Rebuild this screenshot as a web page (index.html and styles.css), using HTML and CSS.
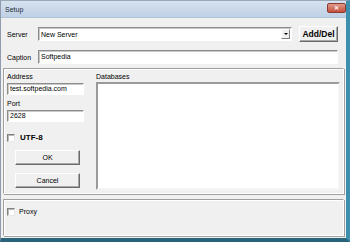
FILE: index.html
```html
<!DOCTYPE html>
<html lang="en">
<head>
	<meta charset="UTF-8">
	<title>Setup</title>
	<link rel="stylesheet" href="styles.css">
</head>
<body>
	<div class="window">
		<div class="titlebar">
			<span class="title">Setup</span>
			<span class="close">&#x2715;</span>
		</div>
		<div class="client">
			<div class="row row-server">
				<span class="lbl">Server</span>
				<div class="combo">
					<span class="combo-text">New Server</span>
					<span class="arrow"></span>
				</div>
				<div class="btn btn-add">Add/Del</div>
			</div>
			<div class="row row-caption">
				<span class="lbl">Caption</span>
				<div class="field field-wide">Softpedia</div>
			</div>
			<div class="group main">
				<div class="left">
					<div class="small-lbl">Address</div>
					<div class="field">test.softpedia.com</div>
					<div class="small-lbl port-lbl">Port</div>
					<div class="field">2628</div>
					<div class="check utf"><span class="box"></span><b>UTF-8</b></div>
					<div class="btn btn-ok">OK</div>
					<div class="btn btn-cancel">Cancel</div>
				</div>
				<div class="right">
					<div class="small-lbl">Databases</div>
					<div class="list"></div>
				</div>
			</div>
			<div class="group proxy">
				<div class="check"><span class="box"></span>Proxy</div>
			</div>
		</div>
	</div>
</body>
</html>
```

FILE: styles.css
```css
*{
	margin: 0;
	padding: 0;
	box-sizing: border-box;
}
body{
	width: 350px;
	height: 242px;
	overflow: hidden;
	font-family: "Liberation Sans", Arial, sans-serif;
	font-size: 7px;
	color: #000;
	background: #fff;
}
.window{
	width: 350px;
	height: 242px;
	border-top: 1px solid #9aa8b8;
	border-left: 1px solid #8e9cad;
	border-right: 4px solid #3d8fae;
	border-bottom: 4px solid #2a6378;
	background: #f0f0f0;
	display: flex;
	flex-direction: column;
}
.titlebar{
	height: 17px;
	background: linear-gradient(#d6e2ef, #bfd1e5);
	border-bottom: 1px solid #b4c4d6;
	display: flex;
	align-items: center;
	justify-content: space-between;
	padding: 0 0 0 4px;
}
.title{
	font-size: 7px;
	color: #1e2a38;
}
.close{
	width: 19px;
	height: 10px;
	margin-top: -2px;
	background: linear-gradient(#e09a8c, #c4503c);
	border: 1px solid #8a3a30;
	border-radius: 2px;
	color: #fff;
	font-size: 6px;
	line-height: 8px;
	text-align: center;
	font-weight: bold;
}
.client{
	flex: 1;
	display: flex;
	flex-direction: column;
	padding-top: 8px;
}
.row{
	display: flex;
	align-items: center;
	padding-left: 6px;
}
.lbl{
	width: 31px;
}
.row-server{
	height: 16px;
}
.combo{
	width: 254px;
	height: 14px;
	background: #fff;
	border: 1px solid;
	border-color: #8c8c8c #fff #fff #8c8c8c;
	box-shadow: inset 1px 1px 0 #c8c8c8;
	display: flex;
	align-items: center;
	justify-content: space-between;
	padding-left: 2px;
}
.arrow{
	width: 9px;
	height: 10px;
	margin-right: 1px;
	background: #f0f0f0;
	border: 1px solid;
	border-color: #fff #808080 #808080 #fff;
	position: relative;
}
.arrow::after{
	content: "";
	position: absolute;
	left: 2px;
	top: 3px;
	border-left: 2px solid transparent;
	border-right: 2px solid transparent;
	border-top: 2px solid #000;
}
.btn{
	background: #f0f0f0;
	border: 1px solid;
	border-color: #fff #6a6a6a #6a6a6a #fff;
	box-shadow: inset -1px -1px 0 #a8a8a8;
	display: flex;
	align-items: center;
	justify-content: center;
}
.btn-add{
	width: 39px;
	height: 16px;
	margin-left: 7px;
	font-weight: bold;
	font-size: 8.5px;
}
.row-caption{
	margin-top: 8px;
	height: 14px;
}
.field{
	height: 12px;
	background: #fff;
	border: 1px solid;
	border-color: #8c8c8c #fff #fff #8c8c8c;
	box-shadow: inset 1px 1px 0 #c8c8c8;
	padding-left: 2px;
	line-height: 10px;
	white-space: nowrap;
	overflow: hidden;
}
.field-wide{
	width: 300px;
	height: 14px;
	line-height: 12px;
}
.group{
	margin-left: 2px;
	width: 341px;
	border: 1px solid;
	border-color: #a0a0a0 #fff #fff #a0a0a0;
	box-shadow: 1px 1px 0 #a0a0a0, inset 1px 1px 0 #fff;
}
.main{
	margin-top: 4px;
	height: 126px;
	display: flex;
	padding: 3px 3px 0 3px;
	gap: 12px;
}
.left{
	width: 77px;
	display: flex;
	flex-direction: column;
}
.small-lbl{
	height: 10px;
	line-height: 10px;
}
.left .field{
	margin-top: 1px;
}
.port-lbl{
	margin-top: 4px;
}
.check{
	display: flex;
	align-items: center;
	gap: 4px;
	height: 9px;
}
.box{
	width: 8px;
	height: 8px;
	background: #fff;
	border: 1px solid;
	border-color: #808080 #e8e8e8 #e8e8e8 #808080;
	box-shadow: inset 1px 1px 0 #b8b8b8;
}
.utf{
	margin-top: 11px;
	gap: 5px;
}
.utf b{
	font-size: 8px;
}
.btn-ok, .btn-cancel{
	width: 65px;
	height: 15px;
	margin-left: 8px;
	margin-top: 8px;
}
.right{
	flex: 1;
	display: flex;
	flex-direction: column;
}
.list{
	height: 108px;
	background: #fff;
	border: 2px solid;
	border-color: #9a9a9a #f4f4f4 #f4f4f4 #9a9a9a;
}
.proxy{
	margin-top: 5px;
	height: 37px;
	padding: 7px 0 0 3px;
}
```
